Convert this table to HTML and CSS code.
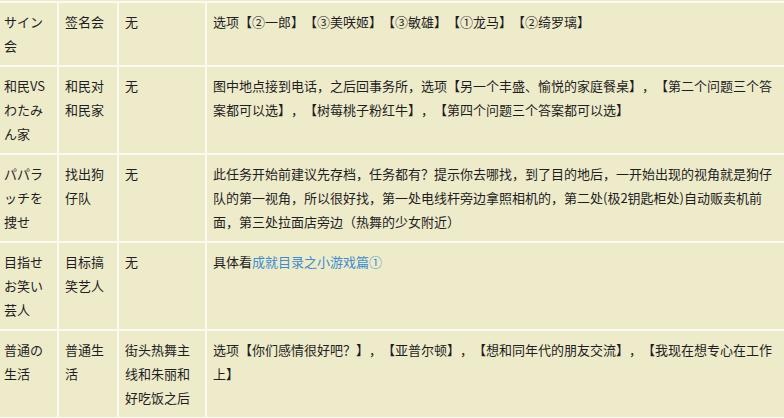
FILE: index.html
```html
<!DOCTYPE html>
<html lang="zh-CN">
<head>
<meta charset="utf-8">
<title>成就目录</title>
<link rel="stylesheet" href="styles.css">
</head>
<body>
<table class="guide">
  <colgroup>
    <col class="c-jp">
    <col class="c-cn">
    <col class="c-cond">
    <col class="c-note">
  </colgroup>
  <tbody>
    <tr>
      <td>サイン会</td>
      <td>签名会</td>
      <td>无</td>
      <td>选项【②一郎】【③美咲姬】【③敏雄】【①龙马】【②绮罗璃】</td>
    </tr>
    <tr>
      <td>和民VSわたみん家</td>
      <td>和民对和民家</td>
      <td>无</td>
      <td>图中地点接到电话，之后回事务所，选项【另一个丰盛、愉悦的家庭餐桌】，【第二个问题三个答案都可以选】，【树莓桃子粉红牛】，【第四个问题三个答案都可以选】</td>
    </tr>
    <tr>
      <td>パパラッチを捜せ</td>
      <td>找出狗仔队</td>
      <td>无</td>
      <td>此任务开始前建议先存档，任务都有？提示你去哪找，到了目的地后，一开始出现的视角就是狗仔队的第一视角，所以很好找，第一处电线杆旁边拿照相机的，第二处(极2钥匙柜处)自动贩卖机前面，第三处拉面店旁边（热舞的少女附近）</td>
    </tr>
    <tr>
      <td>目指せお笑い芸人</td>
      <td>目标搞笑艺人</td>
      <td>无</td>
      <td>具体看<a class="link" href="#">成就目录之小游戏篇①</a></td>
    </tr>
    <tr>
      <td>普通の生活</td>
      <td>普通生活</td>
      <td>街头热舞主线和朱丽和好吃饭之后</td>
      <td>选项【你们感情很好吧？】，【亚普尔顿】，【想和同年代的朋友交流】，【我现在想专心在工作上】</td>
    </tr>
  </tbody>
</table>
</body>
</html>
```

FILE: styles.css
```css
html, body {
  margin: 0;
  padding: 0;
  overflow: hidden;
  background: #eeebcb;
}

.guide {
  margin: 1px 0 0 -4px;
  border-collapse: separate;
  border-spacing: 2px;
  background: #fbfaef;
  table-layout: fixed;
  width: 790px;
  font-family: "Microsoft YaHei", "Noto Sans CJK SC", sans-serif;
  font-size: 13px;
  line-height: 24px;
  color: #1e1e1e;
  text-spacing-trim: space-all;
}

.c-jp { width: 59px; }
.c-cn { width: 58px; }
.c-cond { width: 86px; }
.c-note { width: 577px; }

.guide td {
  background: #eeebcb;
  padding: 7px 6px;
  vertical-align: top;
  word-break: break-all;
}

.link {
  color: #3d8bcb;
  text-decoration: none;
}
```
